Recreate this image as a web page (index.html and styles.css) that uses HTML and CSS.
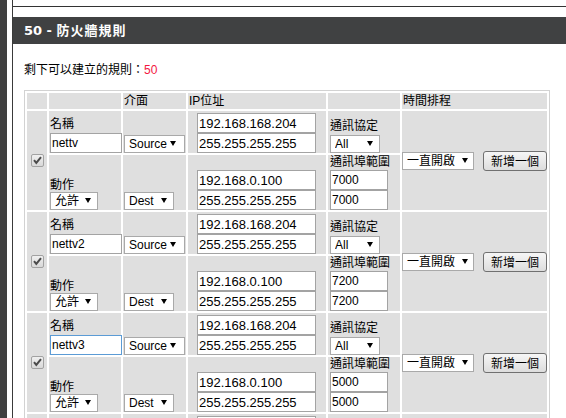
FILE: index.html
```html
<!DOCTYPE html>
<html lang="zh-Hant">
<head>
<meta charset="utf-8">
<title>防火牆規則</title>
<link rel="stylesheet" href="styles.css">
</head>
<body>
<div class="page">
  <div class="rail"></div>
  <div class="main">
    <div class="prev-box"></div>
    <section class="panel">
      <h2 class="panel-title">50 - <span class="cjk">防火牆規則</span></h2>
      <div class="panel-body">
        <p class="remain">剩下可以建立的規則：<span class="count">50</span></p>
        <table class="rules">
          <thead>
            <tr>
              <th class="c1"></th>
              <th class="c2"></th>
              <th class="c3">介面</th>
              <th class="c4">IP位址</th>
              <th class="c5"></th>
              <th class="c6">時間排程</th>
            </tr>
          </thead>
          <tbody>
            <!-- rule 1 -->
            <tr class="upper">
              <td class="chk" rowspan="2"><span class="checkbox"><svg width="13" height="13" viewBox="0 0 13 13"><path d="M3 6.2 L5.3 9 L10 3.2" fill="none" stroke="#4b4b4b" stroke-width="2"/></svg></span></td>
              <td class="name"><div class="lbl">名稱</div><input class="txt w-name" type="text" value="nettv"></td>
              <td class="iface"><span class="sel w-src"><select><option>Source</option></select></span></td>
              <td class="ip"><input class="txt ipt" type="text" value="192.168.168.204"><input class="txt ipt" type="text" value="255.255.255.255"></td>
              <td class="proto"><div class="lbl">通訊協定</div><span class="sel w-all"><select><option>All</option></select></span></td>
              <td class="sched" rowspan="2"><div class="sched-ctrls"><span class="sel w-time"><select><option>一直開啟</option></select></span><button class="btn" type="button">新增一個</button></div></td>
            </tr>
            <tr class="lower">
              <td class="name"><div class="lbl lbl-act">動作</div><span class="sel w-act"><select><option>允許</option></select></span></td>
              <td class="iface"><span class="sel w-dest"><select><option>Dest</option></select></span></td>
              <td class="ip"><input class="txt ipt" type="text" value="192.168.0.100"><input class="txt ipt" type="text" value="255.255.255.255"></td>
              <td class="port"><div class="lbl lbl-port">通訊埠範圍</div><input class="txt w-port" type="text" value="7000"><input class="txt w-port" type="text" value="7000"></td>
            </tr>
            <!-- rule 2 -->
            <tr class="upper">
              <td class="chk" rowspan="2"><span class="checkbox"><svg width="13" height="13" viewBox="0 0 13 13"><path d="M3 6.2 L5.3 9 L10 3.2" fill="none" stroke="#4b4b4b" stroke-width="2"/></svg></span></td>
              <td class="name"><div class="lbl">名稱</div><input class="txt w-name" type="text" value="nettv2"></td>
              <td class="iface"><span class="sel w-src"><select><option>Source</option></select></span></td>
              <td class="ip"><input class="txt ipt" type="text" value="192.168.168.204"><input class="txt ipt" type="text" value="255.255.255.255"></td>
              <td class="proto"><div class="lbl">通訊協定</div><span class="sel w-all"><select><option>All</option></select></span></td>
              <td class="sched" rowspan="2"><div class="sched-ctrls"><span class="sel w-time"><select><option>一直開啟</option></select></span><button class="btn" type="button">新增一個</button></div></td>
            </tr>
            <tr class="lower">
              <td class="name"><div class="lbl lbl-act">動作</div><span class="sel w-act"><select><option>允許</option></select></span></td>
              <td class="iface"><span class="sel w-dest"><select><option>Dest</option></select></span></td>
              <td class="ip"><input class="txt ipt" type="text" value="192.168.0.100"><input class="txt ipt" type="text" value="255.255.255.255"></td>
              <td class="port"><div class="lbl lbl-port">通訊埠範圍</div><input class="txt w-port" type="text" value="7200"><input class="txt w-port" type="text" value="7200"></td>
            </tr>
            <!-- rule 3 -->
            <tr class="upper">
              <td class="chk" rowspan="2"><span class="checkbox"><svg width="13" height="13" viewBox="0 0 13 13"><path d="M3 6.2 L5.3 9 L10 3.2" fill="none" stroke="#4b4b4b" stroke-width="2"/></svg></span></td>
              <td class="name"><div class="lbl">名稱</div><input class="txt w-name focus" type="text" value="nettv3"></td>
              <td class="iface"><span class="sel w-src"><select><option>Source</option></select></span></td>
              <td class="ip"><input class="txt ipt" type="text" value="192.168.168.204"><input class="txt ipt" type="text" value="255.255.255.255"></td>
              <td class="proto"><div class="lbl">通訊協定</div><span class="sel w-all"><select><option>All</option></select></span></td>
              <td class="sched" rowspan="2"><div class="sched-ctrls"><span class="sel w-time"><select><option>一直開啟</option></select></span><button class="btn" type="button">新增一個</button></div></td>
            </tr>
            <tr class="lower">
              <td class="name"><div class="lbl lbl-act">動作</div><span class="sel w-act"><select><option>允許</option></select></span></td>
              <td class="iface"><span class="sel w-dest"><select><option>Dest</option></select></span></td>
              <td class="ip"><input class="txt ipt" type="text" value="192.168.0.100"><input class="txt ipt" type="text" value="255.255.255.255"></td>
              <td class="port"><div class="lbl lbl-port">通訊埠範圍</div><input class="txt w-port" type="text" value="5000"><input class="txt w-port" type="text" value="5000"></td>
            </tr>
            <!-- rule 4 (only its top edge is in view) -->
            <tr class="upper">
              <td class="chk"></td>
              <td class="name"></td>
              <td class="iface"></td>
              <td class="ip"><input class="txt ipt" type="text" value=""><input class="txt ipt" type="text" value=""></td>
              <td class="proto"></td>
              <td class="sched"></td>
            </tr>
          </tbody>
        </table>
      </div>
    </section>
  </div>
</div>
</body>
</html>
```

FILE: styles.css
```css
* { box-sizing: border-box; }

html, body {
  margin: 0;
  padding: 0;
  background: #fff;
}

body {
  font-family: "Liberation Sans", "Noto Sans CJK TC", sans-serif;
  font-size: 12px;
  color: #000;
  overflow: hidden;
}

.page {
  display: flex;
  min-height: 418px;
}

.rail {
  flex: none;
  width: 7px;
  background: #3f3f3f;
}

.main {
  flex: 1;
  min-width: 0;
  margin-left: 5px;
  border-left: 1px solid #3a3a3a;
}

.prev-box {
  height: 7px;
  border-bottom: 1px solid #333;
}

.panel {
  margin-top: 10px;
}

.panel-title {
  margin: 0;
  height: 27px;
  padding-left: 11px;
  background: #404142;
  color: #fff;
  font: bold 13px/27px "DejaVu Sans", "Noto Sans CJK TC", sans-serif;
}

.panel-title .cjk {
  letter-spacing: 1px;
}

.panel-body {
  padding: 18px 0 0 11px;
}

.remain {
  margin: 0 0 12px;
  line-height: 16px;
}

.count {
  color: #f3173f;
}

/* table */
.rules {
  table-layout: fixed;
  width: 526px;
  border-collapse: separate;
  border-spacing: 2px;
  border: 1px solid #d2d2d2;
  background: #fff;
}

.rules th,
.rules td {
  background: #dfdfdf;
  padding: 0;
}

.rules th {
  height: 16px;
  padding: 0 1px;
  line-height: 16px;
  font-weight: normal;
  text-align: left;
  vertical-align: middle;
}

.c1 { width: 20px; }
.c2 { width: 72px; }
.c3 { width: 63px; }
.c4 { width: 138px; }
.c5 { width: 72px; }
.c6 { width: 145px; }

.rules td {
  vertical-align: bottom;
}

.upper td { height: 42px; }
.lower td { height: 55px; }

.rules td.chk,
.rules td.sched {
  vertical-align: middle;
}

td.name { padding-left: 1px; }
td.iface { padding-left: 1px; }
td.ip { padding-left: 9px; }
td.proto,
td.port { padding-left: 2px; }

.lbl {
  line-height: 16px;
  margin-bottom: 1px;
  white-space: nowrap;
}

.lbl-act { margin-bottom: -1px; }

.lbl-port {
  line-height: 14px;
  margin-bottom: 1px;
}

/* checkbox */
.checkbox {
  display: block;
  width: 13px;
  height: 13px;
  margin: 0 auto;
  border: 1px solid #a2a2a2;
  border-radius: 2px;
  background: linear-gradient(#f0f0f0, #d8d8d8);
}

.checkbox svg {
  display: block;
  margin: -1px 0 0 -1px;
}

/* text inputs */
.txt {
  display: block;
  height: 20px;
  margin: 0;
  padding: 0 1px;
  border: 1px solid #a3a3a3;
  border-radius: 0;
  background: #fff;
  color: #000;
  font: 12px "Liberation Sans", "Noto Sans CJK TC", sans-serif;
  outline: none;
}

.txt.focus { border-color: #5b9bd5; }

.w-name { width: 72px; }
.ipt { width: 119px; font-size: 13px; }
.w-port { width: 58px; }

/* selects */
.sel {
  position: relative;
  display: block;
}

.sel select {
  display: block;
  width: 100%;
  height: 18px;
  margin: 0;
  padding: 0 0 0 4px;
  border: 1px solid #a9a9a9;
  border-radius: 0;
  background: #fff;
  color: #000;
  font: 12px "Liberation Sans", "Noto Sans CJK TC", sans-serif;
  -webkit-appearance: none;
  appearance: none;
}

.sel::after {
  content: "";
  position: absolute;
  right: 7px;
  top: 6px;
  border-left: 3px solid transparent;
  border-right: 3px solid transparent;
  border-top: 5px solid #000;
  pointer-events: none;
}

.w-src { width: 61px; }
.w-src::after { right: 9px; }
.w-act { width: 48px; }
.w-dest { width: 50px; }
.w-all { width: 50px; }
.w-time { width: 72px; }
.w-time::after { right: 6px; }

.sched-ctrls {
  display: flex;
  align-items: center;
  gap: 9px;
}

.btn {
  width: 64px;
  height: 20px;
  margin: 0;
  padding: 0;
  border: 1px solid #707070;
  border-radius: 3px;
  background: linear-gradient(#f6f6f6, #dddddd);
  color: #000;
  font: 12px "Liberation Sans", "Noto Sans CJK TC", sans-serif;
}
```
